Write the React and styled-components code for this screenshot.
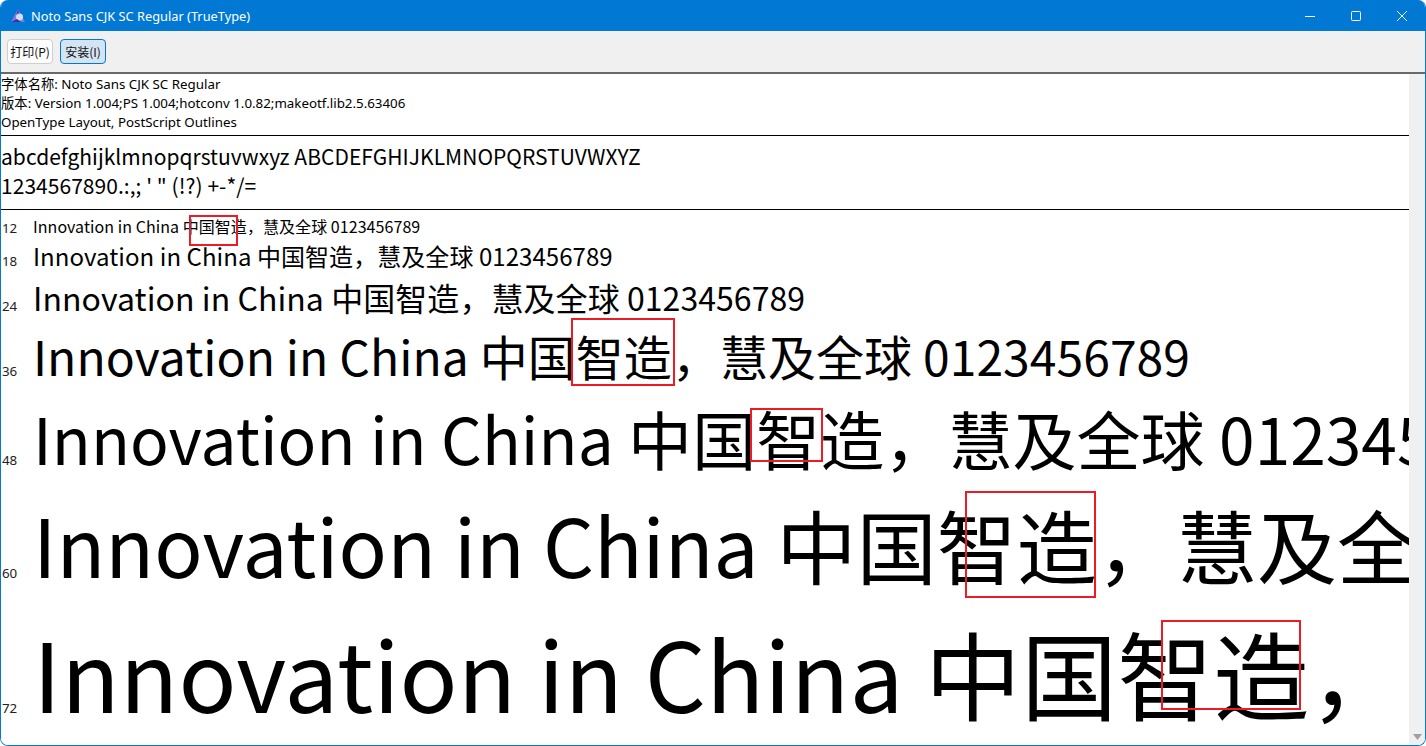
import React from "react";
import styled, { createGlobalStyle } from "styled-components";

const SAMPLE = "Innovation in China 中国智造，慧及全球 0123456789";
const SIZES = [12, 18, 24, 36, 48, 60, 72];
const MARKS = [
  { left: 188, top: 141, width: 49, height: 31 },
  { left: 570, top: 244, width: 104, height: 68 },
  { left: 749, top: 334, width: 73, height: 54 },
  { left: 964, top: 417, width: 131, height: 107 },
  { left: 1160, top: 546, width: 140, height: 90 },
];

const Global = createGlobalStyle`
  html, body { margin: 0; padding: 0; background: #fff; overflow: hidden; }
  body { font-family: "Noto Sans", "Noto Sans CJK SC", sans-serif; }
`;

const Win = styled.div`
  width: 1426px;
  height: 746px;
  box-sizing: border-box;
  display: flex;
  flex-direction: column;
  overflow: hidden;
  border: 1px solid #0078d4;
  border-top: 0;
  border-radius: 8px;
`;

const TitleBar = styled.div`
  height: 31px;
  flex: none;
  background: #0078d4;
  color: #fff;
  display: flex;
  align-items: center;
  padding-left: 9px;
  font-size: 12.8px;
`;

const TitleText = styled.span`
  margin-left: 5px;
  flex: 1;
`;

const WinBtn = styled.div`
  width: 46px;
  height: 31px;
  display: flex;
  align-items: center;
  justify-content: center;
`;

const Toolbar = styled.div`
  height: 41px;
  flex: none;
  box-sizing: border-box;
  background: #f0f0f0;
  display: flex;
  align-items: center;
  gap: 7px;
  padding: 0 0 1px 6px;
`;

const ToolBtn = styled.div`
  height: 25px;
  width: 46px;
  box-sizing: border-box;
  display: flex;
  align-items: center;
  justify-content: center;
  font-size: 12px;
  white-space: nowrap;
  color: #111;
  border-radius: 4px;
  font-family: "Noto Sans CJK SC", sans-serif;
  background: ${(p) => (p.$active ? "#d5e4f2" : "#fdfdfd")};
  border: 1px solid ${(p) => (p.$active ? "#0078d4" : "#cfcfcf")};
`;

const Divider = styled.div`
  height: 2px;
  flex: none;
  background: #696969;
`;

const Body = styled.div`
  flex: 1;
  min-height: 0;
  display: flex;
`;

const Content = styled.div`
  flex: 1;
  min-width: 0;
  position: relative;
  overflow: hidden;
  background: #fff;
  color: #000;
`;

const Gutter = styled.div`
  width: 16px;
  flex: none;
  background: #f0f0f0;
  display: flex;
  align-items: flex-end;
  justify-content: center;
  padding-bottom: 5px;
  box-sizing: border-box;
`;

const Info = styled.div`
  padding-top: 1px;
  height: 62px;
  box-sizing: border-box;
  border-bottom: 1px solid #000;
  font-size: 13.33px;
  line-height: 19px;
  white-space: nowrap;
`;

const Glyphs = styled.div`
  height: 74px;
  box-sizing: border-box;
  border-bottom: 1px solid #000;
  padding-top: 6px;
  font-family: "Noto Sans CJK SC", sans-serif;
  font-size: 21px;
  letter-spacing: 0.04px;
  line-height: 29px;
  white-space: nowrap;
`;

const Samples = styled.div`
  padding-top: 5px;
`;

const Row = styled.div`
  display: flex;
  align-items: baseline;
  white-space: nowrap;
`;

const Size = styled.span`
  width: 32px;
  flex: none;
  padding-left: 1px;
  box-sizing: border-box;
  font-size: 13.33px;
  color: #222;
`;

const Sample = styled.span`
  font-family: "Noto Sans CJK SC", sans-serif;
  font-size: ${(p) => p.$pt * (4 / 3)}px;
  line-height: 1.465;
  letter-spacing: 0.06px;
`;

const Mark = styled.div`
  position: absolute;
  box-sizing: border-box;
  border: 2px solid #ed1c24;
`;

function AppIcon() {
  return (
    <svg width="16" height="16" viewBox="0 0 16 16">
      <path d="M8 1 L15 14 H1 Z" fill="#7f7bdc" />
      <path d="M8 1 L10 8 H6 Z" fill="#4a45b8" />
      <circle cx="9.5" cy="9" r="3.6" fill="#d5dcf6" />
      <path d="M1 14 L7 11 L11 14 Z" fill="#39359a" />
    </svg>
  );
}

export default function App() {
  return (
    <>
      <Global />
      <Win>
        <TitleBar>
          <AppIcon />
          <TitleText>Noto Sans CJK SC Regular (TrueType)</TitleText>
          <WinBtn>
            <svg width="10" height="10" viewBox="0 0 10 10">
              <path d="M0 5.5 H10" stroke="#fff" />
            </svg>
          </WinBtn>
          <WinBtn>
            <svg width="10" height="10" viewBox="0 0 10 10">
              <rect x="0.5" y="0.5" width="9" height="9" rx="1" fill="none" stroke="#fff" />
            </svg>
          </WinBtn>
          <WinBtn>
            <svg width="10" height="10" viewBox="0 0 10 10">
              <path d="M0 0 L10 10 M10 0 L0 10" stroke="#fff" />
            </svg>
          </WinBtn>
        </TitleBar>
        <Toolbar>
          <ToolBtn>打印(P)</ToolBtn>
          <ToolBtn $active>安装(I)</ToolBtn>
        </Toolbar>
        <Divider />
        <Body>
          <Content>
            <Info>
              <div>字体名称: Noto Sans CJK SC Regular</div>
              <div>版本: Version 1.004;PS 1.004;hotconv 1.0.82;makeotf.lib2.5.63406</div>
              <div>OpenType Layout, PostScript Outlines</div>
            </Info>
            <Glyphs>
              <div>abcdefghijklmnopqrstuvwxyz ABCDEFGHIJKLMNOPQRSTUVWXYZ</div>
              <div>{"1234567890.:,; ' \" (!?) +-*/="}</div>
            </Glyphs>
            <Samples>
              {SIZES.map((pt) => (
                <Row key={pt}>
                  <Size>{pt}</Size>
                  <Sample $pt={pt}>{SAMPLE}</Sample>
                </Row>
              ))}
            </Samples>
            {MARKS.map((m) => (
              <Mark key={m.left} style={m} />
            ))}
          </Content>
          <Gutter>
            <svg width="9" height="6" viewBox="0 0 9 6">
              <path d="M0 0 H9 L4.5 6 Z" fill="#a0a0a0" />
            </svg>
          </Gutter>
        </Body>
      </Win>
    </>
  );
}
